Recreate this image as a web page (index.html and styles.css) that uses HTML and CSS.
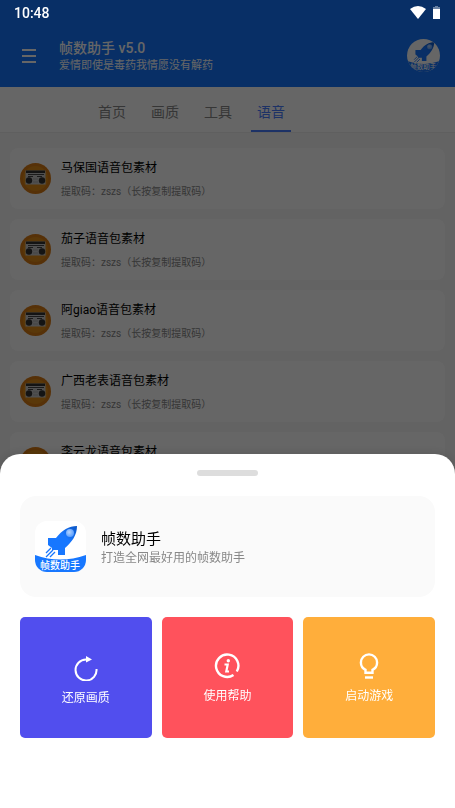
FILE: index.html
```html
<!DOCTYPE html>
<html lang="zh-CN">
<head>
<meta charset="utf-8">
<meta name="viewport" content="width=device-width, initial-scale=1">
<title>帧数助手</title>
<link rel="stylesheet" href="styles.css">
</head>
<body>
<svg class="defs" aria-hidden="true">
  <defs>
    <linearGradient id="hull" x1="0" y1="1" x2="1" y2="0">
      <stop offset="0.6" stop-color="#1777ff"/>
      <stop offset="1" stop-color="#0a55c4"/>
    </linearGradient>
    <radialGradient id="glass" cx="0.4" cy="0.4" r="0.6">
      <stop offset="0" stop-color="#b4d4ff"/>
      <stop offset="1" stop-color="#5a9fff"/>
    </radialGradient>
  </defs>
  <symbol id="logo" viewBox="0 0 51 51">
    <rect width="51" height="51" fill="#fff"/>
    <path d="M0 34Q25 43 51 34V51H0Z" fill="#1777ff"/>
    <path d="M42 5C34 5 27 9 21 17H13V24L17 27V29H23V34H30V27C37 21 42 14 42 5Z" fill="url(#hull)"/>
    <circle cx="35" cy="12" r="4" fill="url(#glass)"/>
    <path d="M16 27l-5 5M18 29l-7 7M20 31l-5 5" stroke="#1777ff" stroke-width="1.300"/>
  </symbol>
  <symbol id="radio" viewBox="0 0 31 31">
    <circle cx="15.500" cy="15.500" r="15.500" fill="#d87a14"/>
    <circle cx="15.500" cy="15.500" r="12.500" fill="#e08c18"/>
    <path d="M5.500 7.500H25.500V21.500H5.500Z" fill="#c8c8c8"/>
    <path d="M6 7.500H25V10H6Z" fill="#333"/>
    <path d="M8 11.500H24M8 13.500H13M17 13.500H22" stroke="#444"/>
    <path d="M13 16H18M13 19H18" stroke="#aaa"/>
    <circle cx="9" cy="17.500" r="3.200" fill="#333"/>
    <circle cx="22" cy="17.500" r="3.200" fill="#333"/>
  </symbol>
</svg>

<div class="status">
  <span>10:48</span>
  <svg class="status-icons" viewBox="0 0 31 14" aria-hidden="true">
    <path d="M0 3Q8-3 16 3L8 13Z" fill="#fff"/>
    <path d="M25 0H28V1H30V4H23V1H25Z" fill="#fff" opacity="0.4"/>
    <path d="M23 3H30V13H23Z" fill="#fff"/>
  </svg>
</div>

<header class="appbar">
  <button class="menu" aria-label="菜单">
    <svg viewBox="0 0 14 14" aria-hidden="true"><path d="M0 1H14M0 7H14M0 13H14" stroke="#fff" stroke-width="2"/></svg>
  </button>
  <div class="heading">
    <h1>帧数助手 v5.0</h1>
    <p>爱情即使是毒药我情愿没有解药</p>
  </div>
  <svg class="avatar" viewBox="0 0 51 51" role="img" aria-label="帧数助手">
    <use href="#logo"/>
    <text x="25" y="47" text-anchor="middle" class="logo-text">帧数助手</text>
  </svg>
</header>

<nav class="tabs">
  <a href="#home">首页</a>
  <a href="#quality">画质</a>
  <a href="#tools">工具</a>
  <a href="#voice" class="active">语音</a>
</nav>

<main class="list">
  <article class="item"><svg aria-hidden="true"><use href="#radio"/></svg><div><h2>马保国语音包素材</h2><p>提取码：zszs（长按复制提取码）</p></div></article>
  <article class="item"><svg aria-hidden="true"><use href="#radio"/></svg><div><h2>茄子语音包素材</h2><p>提取码：zszs（长按复制提取码）</p></div></article>
  <article class="item"><svg aria-hidden="true"><use href="#radio"/></svg><div><h2>阿giao语音包素材</h2><p>提取码：zszs（长按复制提取码）</p></div></article>
  <article class="item"><svg aria-hidden="true"><use href="#radio"/></svg><div><h2>广西老表语音包素材</h2><p>提取码：zszs（长按复制提取码）</p></div></article>
  <article class="item"><svg aria-hidden="true"><use href="#radio"/></svg><div><h2>李云龙语音包素材</h2><p>提取码：zszs（长按复制提取码）</p></div></article>
</main>

<div class="scrim">
  <section class="sheet" role="dialog" aria-label="帧数助手">
    <div class="handle"></div>
    <div class="about">
      <svg class="app-icon" viewBox="0 0 51 51" aria-hidden="true">
        <use href="#logo"/>
        <text x="25" y="48" text-anchor="middle" class="logo-text">帧数助手</text>
      </svg>
      <div>
        <h2>帧数助手</h2>
        <p>打造全网最好用的帧数助手</p>
      </div>
    </div>
    <div class="actions">
      <button class="restore">
        <svg viewBox="0 0 26 26" fill="none" stroke="#fff" stroke-width="2" aria-hidden="true">
          <path d="M23.500 14A10.500 10.500 0 1 1 13 4.500H15"/>
          <path d="M13 1L19 4.500L13 7.500Z" fill="#fff" stroke="none"/>
        </svg>
        <span>还原画质</span>
      </button>
      <button class="help">
        <svg viewBox="0 0 26 26" fill="none" stroke="#fff" stroke-width="2.400" aria-hidden="true">
          <path d="M22.800 18.500A11.200 11.200 0 1 0 19.500 22"/>
          <circle cx="14.300" cy="7.800" r="1.700" fill="#fff" stroke="none"/>
          <path d="M10.500 11.500H13.700L12.300 18.500H15" stroke-width="2.200"/>
        </svg>
        <span>使用帮助</span>
      </button>
      <button class="launch">
        <svg viewBox="0 0 26 26" fill="none" stroke="#fff" stroke-width="2.400" aria-hidden="true">
          <path d="M9.500 19.800V16.800C6.400 15.300 4.900 12.800 4.900 9.500A8.100 8.100 0 0 1 21.100 9.500C21.100 12.800 19.600 15.300 16.500 16.800V19.800Z"/>
          <path d="M9 24.500H17"/>
        </svg>
        <span>启动游戏</span>
      </button>
    </div>
  </section>
</div>
</body>
</html>
```
FILE: styles.css
```css
* {
  box-sizing: border-box;
}

html,
body {
  height: 100%;
}

body {
  margin: 0;
  overflow: hidden;
  background: #f7f7f7;
  font-family: Roboto, "Noto Sans CJK SC", sans-serif;
  color: #000;
}

h1,
h2,
p {
  margin: 0;
  font-weight: 400;
}

button {
  margin: 0;
  padding: 0;
  border: 0;
  background: none;
  color: inherit;
  font: inherit;
}

.defs {
  position: absolute;
  width: 0;
  height: 0;
}

.logo-text {
  fill: #fff;
  font-size: 10px;
  font-weight: 500;
}

.status {
  position: fixed;
  inset: 0 0 auto;
  z-index: 2;
  display: flex;
  align-items: center;
  justify-content: space-between;
  height: 26px;
  padding: 0 14px;
  color: #fff;
  font-size: 14px;
  font-weight: 500;
}

.status-icons {
  width: 31px;
  height: 14px;
}

.appbar {
  display: flex;
  align-items: center;
  height: 87px;
  padding: 24px 15px 0 22px;
  background: #1476ff;
  color: #fff;
}

.menu {
  width: 14px;
  height: 14px;
}

.menu svg {
  display: block;
}

.heading {
  flex: 1;
  padding: 3px 0 0 23px;
}

.heading h1 {
  font-size: 14px;
  font-weight: 500;
  line-height: 18px;
}

.heading p {
  font-size: 11px;
  line-height: 18px;
}

.avatar {
  width: 33px;
  height: 33px;
  border-radius: 50%;
}

.tabs {
  display: flex;
  gap: 13px;
  height: 46px;
  padding-left: 92px;
  border-bottom: 1px solid #eee;
  background: #fff;
}

.tabs a {
  width: 40px;
  border-bottom: 2px solid transparent;
  color: #888;
  font-size: 14px;
  line-height: 51px;
  text-align: center;
  text-decoration: none;
}

.tabs .active {
  border-color: #4a7dff;
  color: #4a7dff;
}

.list {
  display: flex;
  flex-direction: column;
  gap: 10px;
  padding: 15px 10px;
}

.item {
  display: flex;
  flex-shrink: 0;
  align-items: center;
  gap: 10px;
  height: 61px;
  padding: 0 10px;
  border-radius: 8px;
  background: #fff;
}

.item div {
  padding-top: 3px;
}

.item svg {
  width: 31px;
  height: 31px;
}

.item h2 {
  font-size: 12px;
  line-height: 24px;
}

.item p {
  color: #888;
  font-size: 10px;
  line-height: 24px;
}

.scrim {
  position: fixed;
  inset: 0;
  z-index: 1;
  display: flex;
  align-items: flex-end;
  background: rgba(0, 0, 0, 0.6);
}

.sheet {
  display: flex;
  flex: 1;
  flex-direction: column;
  gap: 20px;
  padding: 16px 20px 70px;
  border-radius: 20px 20px 0 0;
  background: #fff;
  box-shadow: 0 0 12px rgba(0, 0, 0, 0.15);
}

.handle {
  align-self: center;
  width: 61px;
  height: 6px;
  border-radius: 3px;
  background: #ddd;
}

.about {
  display: flex;
  align-items: center;
  gap: 15px;
  padding: 25px 15px;
  border-radius: 16px;
  background: #fafafa;
}

.about div {
  padding-top: 3px;
}

.app-icon {
  width: 51px;
  height: 51px;
  border-radius: 12px;
}

.about h2 {
  font-size: 15px;
  line-height: 19px;
}

.about p {
  color: #888;
  font-size: 12px;
  line-height: 18px;
}

.actions {
  display: grid;
  grid-template-columns: repeat(3, 1fr);
  gap: 10px;
}

.actions button {
  display: flex;
  flex-direction: column;
  align-items: center;
  justify-content: center;
  gap: 7px;
  height: 121px;
  padding-top: 4px;
  border-radius: 5px;
  color: #fff;
  font-size: 12px;
  line-height: 20px;
}

.actions svg {
  width: 26px;
  height: 26px;
}

.actions .restore {
  padding-top: 8px;
  background: #514eee;
}

.help {
  background: #ff525c;
}

.launch {
  background: #ffae3b;
}
```
